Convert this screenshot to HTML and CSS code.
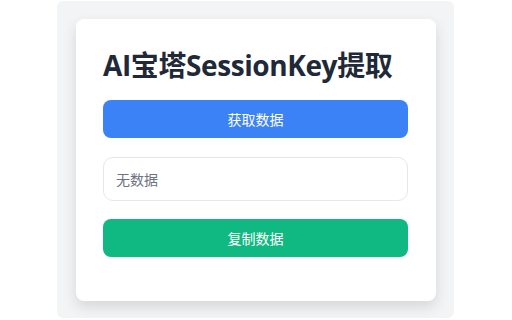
FILE: index.html
```html
<!DOCTYPE html>
<html lang="zh">
<head>
<meta charset="utf-8">
<link rel="stylesheet" href="styles.css">
</head>
<body>
<div class="frame">
  <div class="card">
    <h1 class="title">AI宝塔SessionKey提取</h1>
    <button class="btn btn-blue">获取数据</button>
    <div class="field">无数据</div>
    <button class="btn btn-green">复制数据</button>
  </div>
</div>
</body>
</html>
```
FILE: styles.css
```css
html, body {
  margin: 0;
  padding: 0;
  background: #ffffff;
  width: 512px;
  height: 320px;
  overflow: hidden;
}
body {
  font-family: "Open Sans", "Noto Sans CJK SC", sans-serif;
}
.frame {
  margin: 1px 0 0 57px;
  width: 397px;
  height: 317px;
  background: #f3f4f6;
  border-radius: 6px;
  box-sizing: border-box;
  padding: 18px 18px 0 19px;
}
.card {
  width: 360px;
  height: 282px;
  box-sizing: border-box;
  background: #ffffff;
  border-radius: 8px;
  box-shadow: 0 6px 14px rgba(0,0,0,0.12);
  padding: 27px 28px 0 27px;
  display: flex;
  flex-direction: column;
}
.title {
  margin: 0 0 16px 0;
  font-family: "Open Sans", "Noto Sans CJK SC", sans-serif;
  font-weight: 700;
  font-size: 28px;
  line-height: 38px;
  color: #1f2937;
  white-space: nowrap;
  letter-spacing: -0.4px;
}
.btn {
  display: block;
  width: 100%;
  height: 38px;
  border: none;
  border-radius: 8px;
  color: #ffffff;
  font-family: "Noto Sans CJK SC", sans-serif;
  font-size: 14px;
  padding: 0;
}
.btn-blue {
  background: #3b82f6;
}
.btn-green {
  background: #10b981;
}
.field {
  margin: 19px 0 18px 0;
  height: 44px;
  box-sizing: border-box;
  border: 1px solid #e5e7eb;
  border-radius: 10px;
  padding: 0 12px;
  display: flex;
  align-items: center;
  font-family: "Noto Sans CJK SC", sans-serif;
  font-size: 14px;
  color: #6b7280;
}
```
